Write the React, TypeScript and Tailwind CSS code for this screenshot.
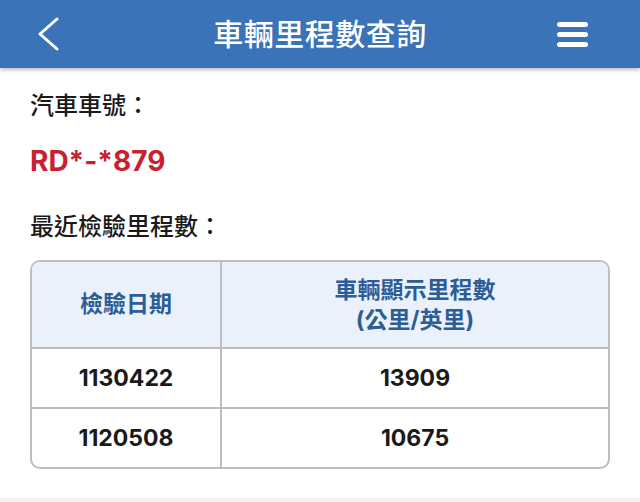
import React from "react";

const font = { fontFamily: '"Inter", "Noto Sans CJK TC", sans-serif' };

function BackIcon() {
  return (
    <svg className="h-[34px] w-[26px]" viewBox="0 0 26 34" fill="none">
      <path d="M21 2 L4 17 L21 32" stroke="white" strokeWidth="3" strokeLinecap="round" strokeLinejoin="round" />
    </svg>
  );
}

function MenuIcon() {
  return (
    <div className="flex w-[31px] flex-col gap-[5px]">
      <span className="block h-[5px] rounded-full bg-white" />
      <span className="block h-[5px] rounded-full bg-white" />
      <span className="block h-[5px] rounded-full bg-white" />
    </div>
  );
}

const rows = [
  { date: "1130422", km: "13909" },
  { date: "1120508", km: "10675" },
];

export default function App() {
  return (
    <div className="flex min-h-[502px] w-[640px] flex-col bg-white text-[#1a1a1a]" style={font}>
      <header className="relative z-10 grid h-[68px] grid-cols-[1fr_auto_1fr] items-center bg-[#3a73b8] pl-[36px] pr-[52px] shadow-[0_2px_4px_rgba(0,0,0,0.25)]">
        <div className="flex">
          <BackIcon />
        </div>
        <h1 className="pl-[16px] text-[30px] font-medium tracking-[0.5px] text-white">車輛里程數查詢</h1>
        <div className="flex justify-end">
          <MenuIcon />
        </div>
      </header>

      <main className="flex flex-col px-[30px]">
        <div className="mt-[22px] text-[24px] font-medium leading-[32px]">汽車車號：</div>
        <div className="mt-[21px] text-[28px] font-bold leading-[36px] text-[#c8202e]">RD*-*879</div>
        <div className="mt-[32px] text-[24px] font-medium leading-[32px]">最近檢驗里程數：</div>

        <div className="mt-[17px] overflow-hidden rounded-[10px] border-2 border-[#bdbdbd]">
          <div className="grid h-[85px] grid-cols-[190px_1fr] bg-[#eaf1fa] text-[23px] font-bold text-[#2d5d96]">
            <div className="flex items-center justify-center border-r-2 border-[#bdbdbd]">檢驗日期</div>
            <div className="flex flex-col items-center justify-center leading-[30px]">
              <span>車輛顯示里程數</span>
              <span>(公里/英里)</span>
            </div>
          </div>
          {rows.map((r) => (
            <div key={r.date} className="grid h-[60px] grid-cols-[190px_1fr] border-t-2 border-[#bdbdbd] text-[23px] font-bold">
              <div className="flex items-center justify-center border-r-2 border-[#bdbdbd]">{r.date}</div>
              <div className="flex items-center justify-center">{r.km}</div>
            </div>
          ))}
        </div>
      </main>

      <div className="mt-[29px] h-[20px] bg-[#fdf0ee]" />
    </div>
  );
}
